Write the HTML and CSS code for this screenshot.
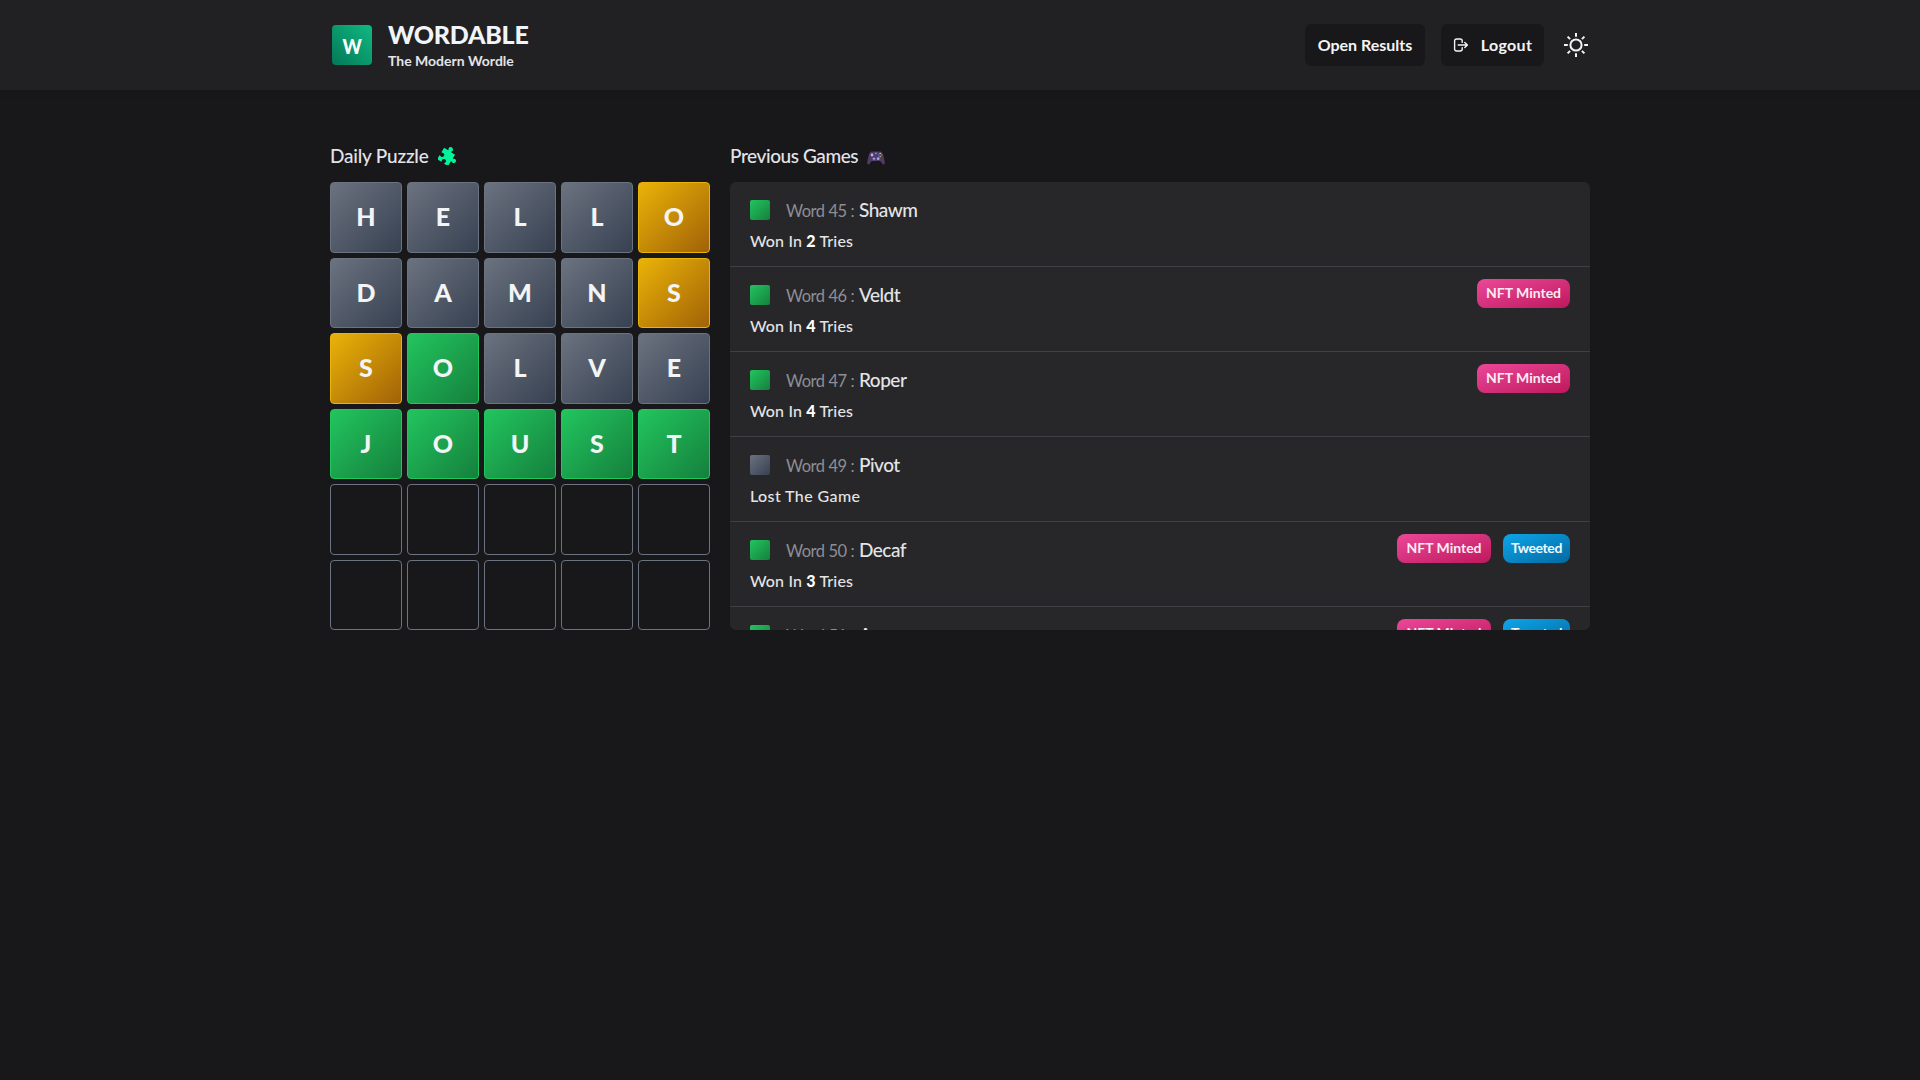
FILE: index.html
```html
<!DOCTYPE html>
<html lang="en">
<head>
<meta charset="utf-8">
<title>Wordable</title>
<link rel="stylesheet" href="styles.css">
</head>
<body>
<header class="header">
  <div class="container header-inner">
    <div class="brand">
      <div class="logo"><span>W</span></div>
      <div class="brand-text">
        <h1>WORDABLE</h1>
        <p>The Modern Wordle</p>
      </div>
    </div>
    <nav class="actions">
      <button class="btn">Open Results</button>
      <button class="btn btn-logout">
        <svg class="icon-logout" viewBox="0 0 16 16" fill="none" stroke="currentColor" stroke-width="1.4" stroke-linecap="round" stroke-linejoin="round"><path d="M9.2 5.400V4A2 2 0 0 0 7.200 2H3.600A2 2 0 0 0 1.600 4v8A2 2 0 0 0 3.600 14h3.600a2 2 0 0 0 2-2v-1.400M5.200 8h9M11.800 5.400 14.400 8l-2.600 2.600"/></svg>
        <span>Logout</span>
      </button>
      <svg class="icon-sun" viewBox="0 0 28 28" fill="none" stroke="currentColor" stroke-width="2"><circle cx="14" cy="14" r="5.6"/><path d="M14 2v3.8M14 22.2V26M2 14h3.8M22.2 14H26M5.6 5.6l2.5 2.5M19.9 19.9l2.5 2.5M5.6 22.4l2.5-2.5M19.9 8.1l2.5-2.5"/></svg>
    </nav>
  </div>
</header>

<main class="container main">
  <section class="puzzle">
    <h2>Daily Puzzle
      <svg class="icon-puzzle" viewBox="1.500 .5 15.500 15.500"><g transform="rotate(32 9 9)" fill="#00f59b"><path d="M3.200 4.400h3.400c.5 0 .6-.4.3-.8C6 2.300 6.800.8 8.400.8s2.400 1.500 1.500 2.800c-.3.4-.2.800.3.800h3.500v3.200c0 .5.4.6.800.3 1.300-.9 2.800-.1 2.800 1.400s-1.500 2.300-2.800 1.400c-.4-.3-.8-.2-.8.3v4.300h-3.300c-.5 0-.6-.4-.3-.8.8-1.200.1-2.500-1.400-2.500s-2.300 1.300-1.500 2.500c.3.4.2.800-.3.800H3.200v-3.500c0-.5.4-.6.800-.3 1.200.8 2.500.1 2.500-1.400S5.200 7.700 4 8.500c-.4.3-.8.200-.8-.3z"/></g></svg>
    </h2>
    <div class="board">
      <div class="tile miss">H</div><div class="tile miss">E</div><div class="tile miss">L</div><div class="tile miss">L</div><div class="tile near">O</div>
      <div class="tile miss">D</div><div class="tile miss">A</div><div class="tile miss">M</div><div class="tile miss">N</div><div class="tile near">S</div>
      <div class="tile near">S</div><div class="tile hit">O</div><div class="tile miss">L</div><div class="tile miss">V</div><div class="tile miss">E</div>
      <div class="tile hit">J</div><div class="tile hit">O</div><div class="tile hit">U</div><div class="tile hit">S</div><div class="tile hit">T</div>
      <div class="tile"></div><div class="tile"></div><div class="tile"></div><div class="tile"></div><div class="tile"></div>
      <div class="tile"></div><div class="tile"></div><div class="tile"></div><div class="tile"></div><div class="tile"></div>
    </div>
  </section>

  <section class="history">
    <h2>Previous Games
      <svg class="icon-pad" viewBox="0 0 18 14"><path fill="#523a66" d="M4 .8C5 .2 6.200.5 7 .5h4c.8 0 2-.3 3 .3 1.500.8 2 2.500 2.500 4.400.6 2.200 1.300 5 1.300 6.800 0 1.700-1.800 2-2.700.5-.8-1.400-1.300-2.600-2.600-2.600h-7c-1.300 0-1.800 1.200-2.600 2.600-.9 1.500-2.700 1.200-2.700-.5C.2 10.200.9 7.400 1.500 5.200 2 3.300 2.500 1.600 4 .8z"/><circle cx="5" cy="4" r="1.400" fill="#a9b8f5"/><path stroke="#a9a2ee" stroke-width="1.100" d="M7 6.400v2.800M5.600 7.800h2.800"/><circle cx="11.200" cy="7.700" r="1.400" fill="#9fa8f0"/><path fill="#b7a9c7" d="M8 1.700h1.800v1H8z"/><circle cx="13.200" cy="2.500" r=".8" fill="#fdc81f"/><circle cx="11.800" cy="4" r=".8" fill="#2f7fd0"/><circle cx="14.700" cy="4" r=".8" fill="#e5484d"/><circle cx="13.200" cy="5.500" r=".8" fill="#8fc93a"/></svg>
    </h2>
    <div class="games">
      <article class="game">
        <div class="info"><div class="word"><i class="mark hit"></i><p><span>Word 45 :</span> <b>Shawm</b></p></div><p class="result">Won In <strong>2</strong> Tries</p></div>
      </article>
      <article class="game">
        <div class="info"><div class="word"><i class="mark hit"></i><p><span>Word 46 :</span> <b>Veldt</b></p></div><p class="result">Won In <strong>4</strong> Tries</p></div>
        <div class="tags"><span class="tag nft">NFT Minted</span></div>
      </article>
      <article class="game">
        <div class="info"><div class="word"><i class="mark hit"></i><p><span>Word 47 :</span> <b>Roper</b></p></div><p class="result">Won In <strong>4</strong> Tries</p></div>
        <div class="tags"><span class="tag nft">NFT Minted</span></div>
      </article>
      <article class="game">
        <div class="info"><div class="word"><i class="mark miss"></i><p><span>Word 49 :</span> <b>Pivot</b></p></div><p class="result lost">Lost The Game</p></div>
      </article>
      <article class="game">
        <div class="info"><div class="word"><i class="mark hit"></i><p><span>Word 50 :</span> <b>Decaf</b></p></div><p class="result">Won In <strong>3</strong> Tries</p></div>
        <div class="tags"><span class="tag nft">NFT Minted</span><span class="tag tweet">Tweeted</span></div>
      </article>
      <article class="game">
        <div class="info"><div class="word"><i class="mark hit"></i><p><span>Word 51 :</span> <b>Aroma</b></p></div><p class="result">Won In <strong>4</strong> Tries</p></div>
        <div class="tags"><span class="tag nft">NFT Minted</span><span class="tag tweet">Tweeted</span></div>
      </article>
    </div>
  </section>
</main>
</body>
</html>
```
FILE: styles.css
```css
* { box-sizing: border-box; margin: 0; padding: 0; }

body {
  min-height: 100vh;
  background: #18181a;
  color: #e4e4e7;
  font-family: Lato, "Open Sans", sans-serif;
  overflow: hidden;
}

.container { width: 1260px; margin: 0 auto; }

/* Header */
.header {
  height: 90px;
  background: #212123;
  box-shadow: 0 4px 6px rgba(0, 0, 0, .08);
}
.header-inner { height: 100%; display: flex; align-items: center; justify-content: space-between; }
.brand { display: flex; align-items: center; gap: 16px; padding-left: 2px; }
.logo {
  width: 40px; height: 40px;
  display: flex; align-items: center; justify-content: center;
  border-radius: 4px;
  background: linear-gradient(to top right, #047857, #10b981);
  color: #fff;
  font-size: 21px; font-weight: 900; line-height: 1;
}
.logo span { transform: scaleX(.87); }
.brand-text { padding-top: 1px; }
.brand-text h1 { font-size: 25px; line-height: 31px; font-weight: 900; letter-spacing: -.25px; color: #f1f5f9; }
.brand-text p { font-size: 14px; line-height: 22px; font-weight: 700; letter-spacing: 0; }

.actions { display: flex; align-items: center; }
.btn {
  height: 42px;
  display: flex; align-items: center; justify-content: center; gap: 12px;
  width: 120px;
  padding-bottom: 1px;
  border: 0; border-radius: 6px;
  background: #18181a;
  color: #f4f4f5;
  font: 700 16px/24px Lato, "Open Sans", sans-serif;
}
.btn-logout { width: 103px; margin: 0 18px 0 16px; letter-spacing: .3px; }
.icon-logout { width: 16px; height: 16px; }
.icon-sun { width: 28px; height: 28px; color: #f4f4f5; }

/* Main layout */
.main { display: grid; grid-template-columns: 380px 1fr; gap: 20px; padding-top: 53px; }
h2 {
  display: flex; align-items: center; gap: 9px;
  height: 39px; padding-bottom: 14px;
  font-size: 19px; line-height: 25px; font-weight: 500; letter-spacing: -.2px;
}
.history h2 { letter-spacing: -.42px; }
.icon-puzzle { width: 19px; height: 19px; }
.icon-pad { width: 18px; height: 14px; margin-top: 4px; }

/* Board */
.board { height: 448px; display: grid; grid-template: repeat(6, 1fr) / repeat(5, 1fr); gap: 5px; }
.tile {
  display: flex; align-items: center; justify-content: center;
  padding-bottom: 2px;
  border: 1px solid #6b7280; border-radius: 4px;
  color: #f3f4f6;
  font-size: 25px; line-height: 30px; font-weight: 900;
}
.miss { background: linear-gradient(to bottom right, #6b7280, #374151); }
.near { background: linear-gradient(to bottom right, #eab308, #a16207); border-color: #eab308; }
.hit { background: linear-gradient(to bottom right, #22c55e, #15803d); border-color: #22c55e; }

/* Previous games */
.games { height: 448px; overflow: hidden; border-radius: 6px; background: #272729; }
.game {
  height: 85px;
  display: flex; justify-content: space-between; align-items: flex-start;
  padding: 0 20px;
  border-bottom: 1px solid #3f3f46;
}
.info { padding-top: 14px; }
.word { height: 28px; display: flex; align-items: center; gap: 16px; }
.word p { line-height: 25px; padding-top: 1px; font-size: 19px; white-space: nowrap; }
.word span { font-size: 16.5px; letter-spacing: -.45px; color: #8e8e97; }
.word b { font-weight: 500; letter-spacing: -.5px; }
.mark { width: 20px; height: 20px; border-radius: 2px; }
.result { font-size: 16px; line-height: 33px; font-weight: 500; letter-spacing: .15px; }
.result strong { font-weight: 900; color: #fff; }
.lost { letter-spacing: .4px; }

.tags { display: flex; gap: 12px; padding-top: 12px; }
.tag {
  height: 29px;
  display: flex; align-items: center; justify-content: center;
  padding-bottom: 3px;
  border-radius: 8px;
  font-size: 14px; font-weight: 700;
  color: #fbeaf3;
}
.nft { width: 94px; background: linear-gradient(to bottom right, #ec4899, #be185d); }
.nft:last-child { width: 93px; }
.tweet { width: 67px; background: linear-gradient(to bottom right, #0ea5e9, #0369a1); letter-spacing: -.4px; color: #f0f9ff; }
```
